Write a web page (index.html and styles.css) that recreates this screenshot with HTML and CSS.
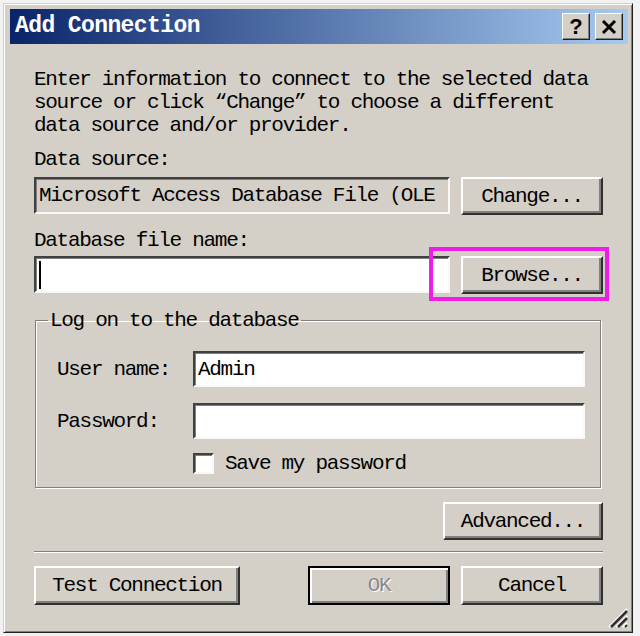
FILE: index.html
```html
<!DOCTYPE html>
<html>
<head>
<meta charset="utf-8">
<title>Add Connection</title>
<link rel="stylesheet" href="styles.css">
</head>
<body>
<div class="dialog">
  <div class="titlebar">
    <span class="title">Add Connection</span>
    <div class="tbtns">
      <span class="tbtn help">?</span>
      <span class="tbtn close">
        <svg width="16" height="14" viewBox="0 0 16 14"><path d="M2 1 L14 13 M14 1 L2 13" stroke="#000" stroke-width="3" fill="none"/></svg>
      </span>
    </div>
  </div>
  <div class="content">
    <p class="intro">Enter information to connect to the selected data<br>source or click “Change” to choose a different<br>data source and/or provider.</p>
    <div class="label">Data source:</div>
    <div class="row">
      <div class="field readonly">Microsoft Access Database File (OLE</div>
      <div class="btn">Change...</div>
    </div>
    <div class="label second">Database file name:</div>
    <div class="row">
      <div class="field"><span class="caret"></span></div>
      <div class="btn-wrap">
        <div class="btn">Browse...</div>
        <span class="highlight"></span>
      </div>
    </div>
    <fieldset class="group">
      <legend>Log on to the database</legend>
      <div class="grow">
        <span class="glabel">User name:</span>
        <div class="field">Admin</div>
      </div>
      <div class="grow">
        <span class="glabel">Password:</span>
        <div class="field"></div>
      </div>
      <div class="check">
        <span class="box"></span>
        <span>Save my password</span>
      </div>
    </fieldset>
    <div class="adv-row">
      <div class="btn adv">Advanced...</div>
    </div>
    <div class="sep"></div>
    <div class="actions">
      <div class="btn test">Test Connection</div>
      <div class="right">
        <div class="btn default disabled">OK</div>
        <div class="btn">Cancel</div>
      </div>
    </div>
  </div>
  <svg class="grip" width="22" height="22" viewBox="0 0 22 22">
    <path d="M21 3 L3 21" stroke="#fff" stroke-width="2"/>
    <path d="M21 5 L5 21" stroke="#303030" stroke-width="2.5"/>
    <path d="M21 10 L10 21" stroke="#fff" stroke-width="2"/>
    <path d="M21 12 L12 21" stroke="#303030" stroke-width="2.5"/>
    <path d="M21 17 L17 21" stroke="#fff" stroke-width="2"/>
    <path d="M21 19 L19 21" stroke="#303030" stroke-width="2"/>
  </svg>
</div>
</body>
</html>
```

FILE: styles.css
```css
* { box-sizing: border-box; }
html, body { margin: 0; padding: 0; }
body {
  width: 640px;
  height: 636px;
  overflow: hidden;
  background: #f2f2f2;
  font-family: "Liberation Mono", "DejaVu Sans Mono", monospace;
  font-size: 21px;
  letter-spacing: -1.3px;
  line-height: 23px;
  color: #000;
}
.dialog {
  position: relative;
  margin: 3px 0 0 3px;
  width: 630px;
  height: 630px;
  background: #d4d0c8;
  border: 1px solid;
  border-color: #d4d0c8 #202020 #202020 #d4d0c8;
  box-shadow: inset 1px 1px #fff, inset -1px -1px #808080;
  padding: 5px 4px 4px 6px;
  display: flex;
  flex-direction: column;
}
.titlebar {
  height: 35px;
  flex: none;
  background: linear-gradient(to right, #0a246a, #a6caf0);
  display: flex;
  align-items: center;
  justify-content: space-between;
  padding: 0 5px 0 5px;
}
.title {
  color: #fff;
  font-weight: bold;
  font-size: 23px;
  letter-spacing: -0.6px;
}
.tbtns { display: flex; gap: 5px; }
.tbtn {
  width: 28px;
  height: 27px;
  display: flex;
  align-items: center;
  justify-content: center;
  background: #d4d0c8;
  border: 1px solid;
  border-color: #fff #202020 #202020 #fff;
  box-shadow: inset -1px -1px #808080;
  font-family: "Liberation Sans", "DejaVu Sans", sans-serif;
  font-weight: bold;
  font-size: 22px;
  letter-spacing: 0;
}
.content {
  flex: 1;
  padding: 24px 25px 0 24px;
}
.intro { margin: 0; }
.label { margin-top: 11px; }
.label.second { margin-top: 14px; }
.row {
  display: grid;
  grid-template-columns: 1fr 142px;
  column-gap: 11px;
  margin-top: 6px;
}
.label.second + .row { margin-top: 4px; }
.field {
  height: 37px;
  background: #fff;
  border: 2px solid;
  border-color: #404040 #f8f8f8 #f8f8f8 #404040;
  box-shadow: inset 1px 1px #808080;
  display: flex;
  align-items: center;
  padding-left: 3px;
  white-space: nowrap;
  overflow: hidden;
}
.field.readonly { background: #d4d0c8; }
.caret {
  display: block;
  width: 2px;
  height: 28px;
  background: #000;
}
.btn {
  height: 38px;
  display: flex;
  align-items: center;
  justify-content: center;
  background: #d4d0c8;
  border: 2px solid;
  border-color: #fff #303030 #303030 #fff;
  box-shadow: inset -2px -2px #808080;
  white-space: nowrap;
}
.btn-wrap { position: relative; }
.highlight {
  position: absolute;
  left: -32px;
  right: -6px;
  top: -9px;
  bottom: -7px;
  border: 4px solid #f21ce8;
}
.group {
  margin: 15px 2px 0 1px;
  padding: 19px 15px 12px 21px;
  border: 1px solid #808080;
  box-shadow: inset 1px 1px #fff, 1px 1px #fff;
  min-width: 0;
}
.group legend {
  padding: 0 2px;
  margin-left: -9px;
}
.grow {
  display: grid;
  grid-template-columns: 136px 1fr;
  align-items: center;
  margin-bottom: 16px;
}
.grow .field { height: 36px; }
.check {
  display: flex;
  align-items: center;
  gap: 11px;
  margin-left: 136px;
  margin-top: -3px;
}
.box {
  width: 21px;
  height: 21px;
  background: #fff;
  border: 2px solid;
  border-color: #404040 #f8f8f8 #f8f8f8 #404040;
  box-shadow: inset 1px 1px #808080;
}
.adv-row {
  display: flex;
  justify-content: flex-end;
  margin-top: 14px;
}
.btn.adv { width: 160px; }
.sep {
  margin-top: 11px;
  height: 2px;
  border-top: 1px solid #808080;
  border-bottom: 1px solid #fff;
}
.actions {
  display: flex;
  justify-content: space-between;
  margin-top: 13px;
}
.actions .btn { height: 39px; }
.btn.test { width: 206px; }
.right { display: flex; gap: 11px; }
.right .btn { width: 142px; }
.btn.default {
  border: 2px solid #000;
  box-shadow: inset 2px 2px #fff, inset -2px -2px #808080;
}
.btn.disabled {
  color: #8a8a8a;
  text-shadow: 1px 1px #fff;
}
.grip {
  position: absolute;
  right: 4px;
  bottom: 4px;
}
```
